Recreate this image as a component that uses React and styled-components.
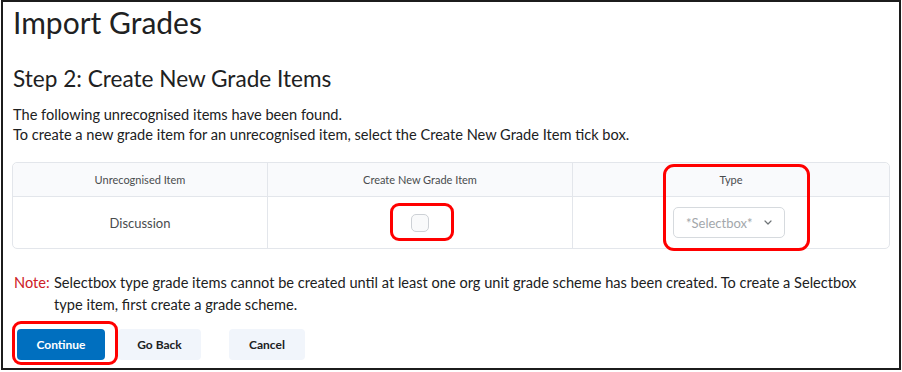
import React from "react";
import styled, { createGlobalStyle } from "styled-components";

const GlobalStyle = createGlobalStyle`
  html, body {
    margin: 0;
    padding: 0;
    background: #ffffff;
  }
  body {
    font-family: Lato, "Noto Sans", sans-serif;
    color: #202122;
  }
`;

const Frame = styled.div`
  box-sizing: border-box;
  width: 900px;
  height: 370px;
  margin: 0 0 0 1px;
  border: 2px solid #1c1c1c;
  padding: 3px 10px 0 10px;
`;

const Title = styled.h1`
  margin: 0;
  font-size: 30px;
  font-weight: 400;
  line-height: 34px;
  color: #202122;
`;

const StepTitle = styled.h2`
  margin: 26px 0 0;
  font-size: 22.6px;
  font-weight: 400;
  line-height: 28px;
  color: #202122;
`;

const Intro = styled.p`
  margin: 12px 0 0;
  font-size: 14.6px;
  line-height: 20px;
`;

const Table = styled.div`
  margin: 17px 0 0 -1px;
  width: 876px;
  border: 1px solid #e3e6eb;
  border-radius: 5px;
  display: grid;
  grid-template-columns: 254px 305px 1fr;
`;

const HeadCell = styled.div`
  position: relative;
  height: 33px;
  background: #f9fafc;
  border-bottom: 1px solid #e3e6eb;
  border-left: ${(p) => (p.$first ? "none" : "1px solid #e3e6eb")};
  border-radius: ${(p) => p.$radius || "0"};
  display: flex;
  align-items: center;
  justify-content: center;
  font-size: 11px;
  color: #494c4e;
`;

const BodyCell = styled.div`
  height: 51px;
  border-left: ${(p) => (p.$first ? "none" : "1px solid #e3e6eb")};
  display: flex;
  align-items: center;
  justify-content: center;
  font-size: 13px;
  color: #494c4e;
`;

const Highlight = styled.div`
  position: relative;
  display: inline-flex;
  align-items: center;
  justify-content: center;
  &::after {
    content: "";
    position: absolute;
    top: ${(p) => -p.$t}px;
    right: ${(p) => -p.$r}px;
    bottom: ${(p) => -p.$b}px;
    left: ${(p) => -p.$l}px;
    border: 3px solid #ff0000;
    border-radius: 9px;
    pointer-events: none;
  }
`;

const TypeBox = styled.div`
  position: absolute;
  left: 90px;
  width: 147px;
  top: 1px;
  height: 87px;
  border: 3px solid #ff0000;
  border-radius: 11px;
  box-sizing: border-box;
  pointer-events: none;
  z-index: 1;
`;

const Checkbox = styled.span`
  box-sizing: border-box;
  width: 18px;
  height: 18px;
  border: 1px solid #cdd1d6;
  border-radius: 5px;
  background: #f9fafb;
`;

const Select = styled.div`
  box-sizing: border-box;
  width: 112px;
  height: 31px;
  margin-right: 4px;
  border: 1px solid #d6dade;
  border-radius: 5px;
  display: flex;
  align-items: center;
  justify-content: space-between;
  padding: 0 12px 0 12px;
  font-size: 13px;
  color: #a3a7ab;
  background: #ffffff;
`;

const Note = styled.div`
  margin-top: 23px;
  display: flex;
  font-size: 14.6px;
  line-height: 22px;
  padding-left: 1px;
`;

const NoteLabel = styled.span`
  color: #cd2026;
  flex: 0 0 40px;
`;

const NoteText = styled.span`
  width: 820px;
`;

const Buttons = styled.div`
  margin-top: 13px;
  display: flex;
  align-items: center;
  padding-left: 4px;
`;

const Button = styled.button`
  box-sizing: border-box;
  height: 31px;
  width: ${(p) => p.$w}px;
  margin-left: ${(p) => p.$ml || 0}px;
  border: none;
  border-radius: 4px;
  font-family: Lato, "Noto Sans", sans-serif;
  font-size: 12px;
  font-weight: 700;
  background: ${(p) => (p.$primary ? "#006fbf" : "#f1f5fb")};
  color: ${(p) => (p.$primary ? "#ffffff" : "#202122")};
  padding: 0;
`;

function Chevron() {
  return (
    <svg width="8" height="5" viewBox="0 0 8 5" fill="none">
      <path d="M1 1l3 3 3-3" stroke="#6e7376" strokeWidth="1.2" strokeLinecap="round" strokeLinejoin="round" />
    </svg>
  );
}

export default function App() {
  return (
    <>
      <GlobalStyle />
      <Frame>
        <Title>Import Grades</Title>
        <StepTitle>Step 2: Create New Grade Items</StepTitle>
        <Intro>
          The following unrecognised items have been found.
          <br />
          To create a new grade item for an unrecognised item, select the Create New Grade Item tick box.
        </Intro>
        <Table>
          <HeadCell $first $radius="5px 0 0 0">Unrecognised Item</HeadCell>
          <HeadCell>Create New Grade Item</HeadCell>
          <HeadCell $radius="0 5px 0 0">
            <TypeBox />
            Type
          </HeadCell>
          <BodyCell $first>Discussion</BodyCell>
          <BodyCell>
            <Highlight $t={11} $r={25} $b={9} $l={21}>
              <Checkbox />
            </Highlight>
          </BodyCell>
          <BodyCell>
            <Select>
              *Selectbox* <Chevron />
            </Select>
          </BodyCell>
        </Table>
        <Note>
          <NoteLabel>Note:</NoteLabel>
          <NoteText>
            Selectbox type grade items cannot be created until at least one org unit grade scheme has been created. To create a Selectbox type item, first create a grade scheme.
          </NoteText>
        </Note>
        <Buttons>
          <Highlight $t={8} $r={13} $b={5} $l={5}>
            <Button $primary $w={88}>Continue</Button>
          </Highlight>
          <Button $w={83} $ml={13}>Go Back</Button>
          <Button $w={76} $ml={28}>Cancel</Button>
        </Buttons>
      </Frame>
    </>
  );
}
